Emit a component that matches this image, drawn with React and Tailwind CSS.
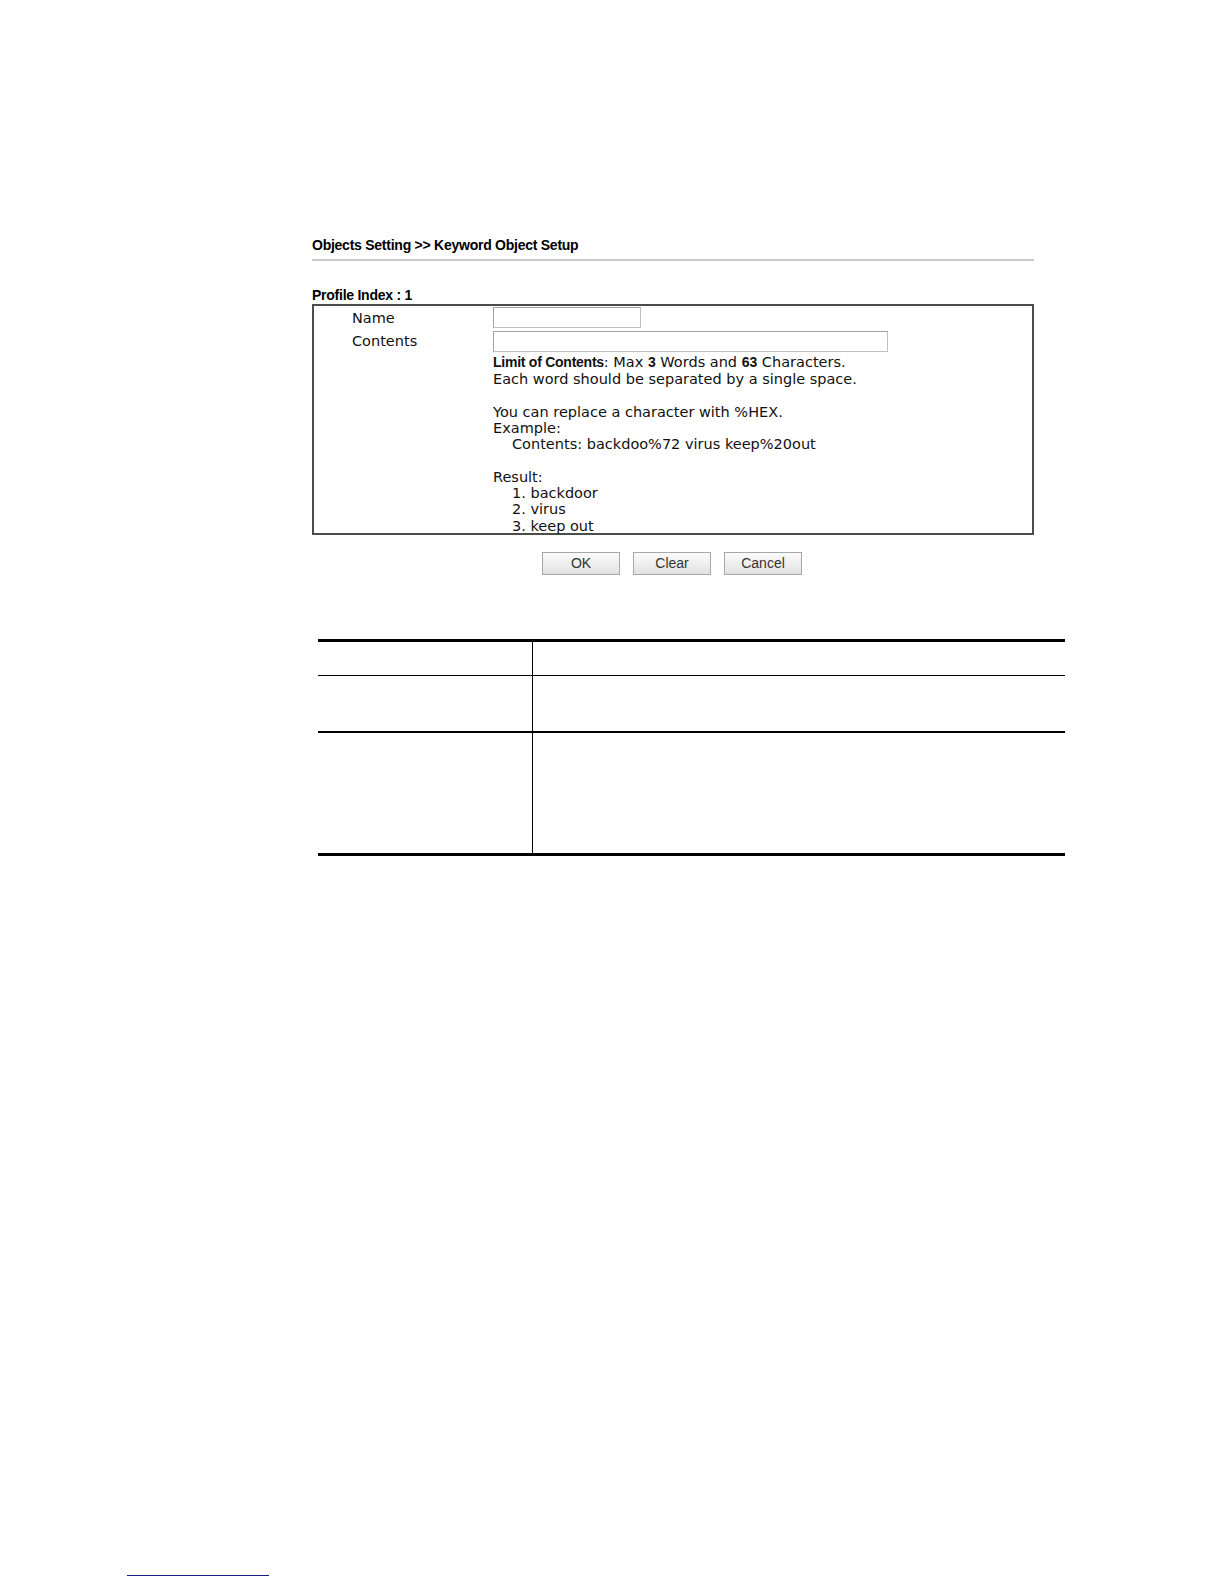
export default function App() {
  const body = { fontFamily: '"DejaVu Sans", Verdana, sans-serif' };
  const bold = { fontFamily: '"Liberation Sans", Arial, sans-serif' };
  return (
    <div className="w-[1224px] h-[1584px] bg-white flex flex-col text-black">
      <div className="pl-[312px] pt-[237px]">
        <div className="w-[722px]">
          <div className="h-[17px] leading-[17px] text-[14px] font-bold tracking-[-0.25px]" style={bold}>
            Objects Setting &gt;&gt; Keyword Object Setup
          </div>
          <div className="mt-[5px] h-[2px] bg-[#c8c8c8]" />
          <div className="mt-[26px] h-[17px] leading-[17px] text-[14px] font-bold tracking-[-0.25px]" style={bold}>
            Profile Index : 1
          </div>
          <div className="h-[231px] border-2 border-[#4c4c4c] text-[14.5px] text-[#111]" style={body}>
            <div className="grid grid-cols-[179px_1fr] pt-[1px]">
              <div className="pl-[38px] flex items-center h-[21px] pt-[2px]">Name</div>
              <div className="h-[21px] w-[148px] border border-[#c0c0c0] border-t-[#a0a0a0] border-l-[#a0a0a0] bg-white" />
              <div className="pl-[38px] flex items-center h-[21px] mt-[3px] pt-[1px]">Contents</div>
              <div className="h-[21px] w-[395px] border border-[#c0c0c0] border-t-[#a0a0a0] border-l-[#a0a0a0] bg-white mt-[3px]" />
              <div />
              <div className="mt-[2px] leading-[16.3px]">
                <div className="h-[17px]">
                  <span className="font-bold text-[14px] tracking-[-0.25px]" style={bold}>Limit of Contents</span>: Max{' '}
                  <span className="font-bold text-[14px]" style={bold}>3</span> Words and{' '}
                  <span className="font-bold text-[14px]" style={bold}>63</span> Characters.
                </div>
                <div>Each word should be separated by a single space.</div>
                <div className="h-[16.3px]" />
                <div>You can replace a character with %HEX.</div>
                <div>Example:</div>
                <div className="pl-[19px]">Contents: backdoo%72 virus keep%20out</div>
                <div className="h-[16.3px]" />
                <div>Result:</div>
                <div className="pl-[19px]">1. backdoor</div>
                <div className="pl-[19px]">2. virus</div>
                <div className="pl-[19px]">3. keep out</div>
              </div>
            </div>
          </div>
          <div className="mt-[17px] flex justify-center gap-[13px] pr-[2px]">
            {['OK', 'Clear', 'Cancel'].map((t) => (
              <button
                key={t}
                className="w-[78px] h-[23px] border border-[#a8a8a8] bg-gradient-to-b from-[#fbfbfb] to-[#e2e2e2] text-[14px] text-[#333] leading-[21px]"
                style={bold}
              >
                {t}
              </button>
            ))}
          </div>
        </div>
      </div>

      <div className="ml-[318px] mt-[64px] w-[747px] border-t-[3px] border-b-[3px] border-black">
        <div className="grid grid-cols-[215px_1fr] h-[34px] border-b border-black">
          <div className="border-r border-black" />
          <div />
        </div>
        <div className="grid grid-cols-[215px_1fr] h-[57px] border-b-2 border-black">
          <div className="border-r border-black" />
          <div />
        </div>
        <div className="grid grid-cols-[215px_1fr] h-[120px]">
          <div className="border-r border-black" />
          <div />
        </div>
      </div>

      <div className="mt-auto mb-[8px] ml-[127px] w-[142px] h-[1px] bg-[#1c1c84]" />
    </div>
  );
}
